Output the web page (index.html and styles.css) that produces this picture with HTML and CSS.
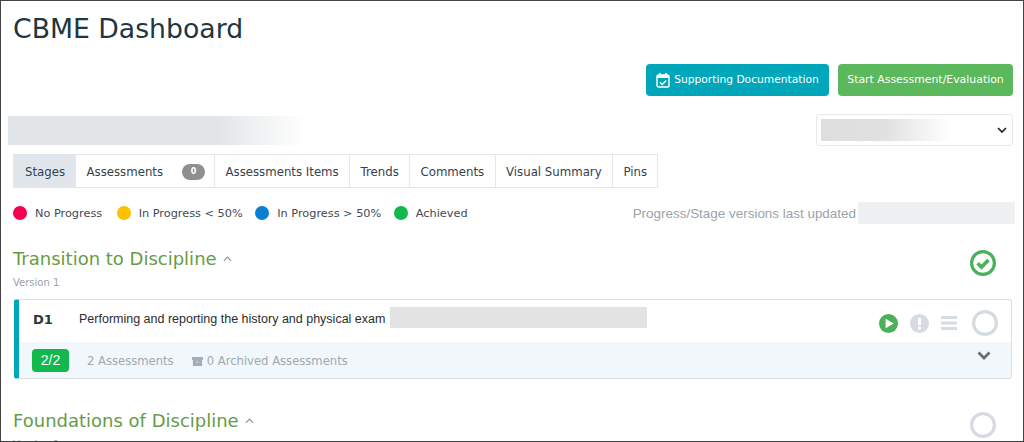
FILE: index.html
```html
<!DOCTYPE html>
<html lang="en">
<head>
<meta charset="utf-8">
<title>CBME Dashboard</title>
<link rel="stylesheet" href="styles.css">
</head>
<body>
<div class="frame">
  <h1 class="title">CBME Dashboard</h1>
  <div class="actions">
    <a class="btn btn-info">
      <svg class="btn-icon" viewBox="0 0 14 16" width="14" height="16" aria-hidden="true"><rect x="1" y="3" width="12" height="12" rx="1.5" fill="none" stroke="currentColor" stroke-width="1.4"/><rect x="1" y="3" width="12" height="3" fill="currentColor"/><rect x="3" y="1" width="2" height="3.5" rx=".6" fill="currentColor"/><rect x="9" y="1" width="2" height="3.5" rx=".6" fill="currentColor"/><path d="M4 10.2l2.2 2.2L10.2 8.4" fill="none" stroke="currentColor" stroke-width="1.4"/></svg>
      Supporting Documentation</a>
    <a class="btn btn-success">Start Assessment/Evaluation</a>
  </div>
  <div class="filter-row">
    <div class="redact-name"></div>
    <div class="select-box">
      <div class="redact-select"></div>
      <svg viewBox="0 0 10 6" width="10" height="6" aria-hidden="true"><path d="M1 1l4 4 4-4" fill="none" stroke="#222" stroke-width="1.7"/></svg>
    </div>
  </div>
  <ul class="tabs">
    <li class="tab tab-active">Stages</li>
    <li class="tab tab-badge">Assessments <span class="badge">0</span></li>
    <li class="tab">Assessments Items</li>
    <li class="tab">Trends</li>
    <li class="tab">Comments</li>
    <li class="tab">Visual Summary</li>
    <li class="tab">Pins</li>
  </ul>
  <div class="legend-row">
    <div class="legend">
      <span class="legend-item"><i class="dot dot-red"></i>No Progress</span>
      <span class="legend-item"><i class="dot dot-yellow"></i>In Progress &lt; 50%</span>
      <span class="legend-item"><i class="dot dot-blue"></i>In Progress &gt; 50%</span>
      <span class="legend-item"><i class="dot dot-green"></i>Achieved</span>
    </div>
    <div class="updated">Progress/Stage versions last updated<span class="redact-date"></span></div>
  </div>
  <section class="stage">
    <div class="stage-head">
      <div>
        <h2 class="stage-title">Transition to Discipline <svg viewBox="0 0 10 6" width="9" height="6" aria-hidden="true"><path d="M1 5l4-4 4 4" fill="none" stroke="#8a949c" stroke-width="1.3"/></svg></h2>
        <div class="version">Version 1</div>
      </div>
      <svg class="stage-status" viewBox="0 0 26 26" width="26" height="26" aria-hidden="true"><circle cx="13" cy="13" r="11.4" fill="none" stroke="#4cb05a" stroke-width="3.2"/><path d="M7.600 13.200l3.900 3.900 7-7" fill="none" stroke="#4cb05a" stroke-width="3.600"/></svg>
    </div>
    <div class="card">
      <div class="card-top">
        <span class="code">D1</span>
        <span class="desc">Performing and reporting the history and physical exam</span>
        <span class="redact-desc"></span>
        <div class="card-icons">
          <svg viewBox="0 0 20 20" width="19" height="19" aria-hidden="true"><circle cx="10" cy="10" r="10" fill="#4cb05a"/><path d="M7 5v10l8.500-5z" fill="#fff"/></svg>
          <svg viewBox="0 0 20 20" width="19" height="19" aria-hidden="true"><circle cx="10" cy="10" r="10" fill="#d5dbe1"/><rect x="8.400" y="4" width="3.200" height="8" rx="1" fill="#fff"/><circle cx="10" cy="14.800" r="1.700" fill="#fff"/></svg>
          <svg viewBox="0 0 16 14" width="16" height="14" aria-hidden="true"><path d="M0 0h16v3H0zM0 5.500h16v3H0zM0 11h16v3H0z" fill="#d5dbe1"/></svg>
          <svg class="ring" viewBox="0 0 26 26" width="26" height="26" aria-hidden="true"><circle cx="13" cy="13" r="11.400" fill="none" stroke="#d5dbe1" stroke-width="3.200"/></svg>
        </div>
      </div>
      <div class="card-bottom">
        <span class="count">2/2</span>
        <span class="meta">2 Assessments</span>
        <span class="meta meta-archived"><svg viewBox="0 0 12 12" width="11" height="11" aria-hidden="true"><path d="M0 1h12v3.400H0zM1 4.400h10V11H1z" fill="#a4aeb7"/><path d="M4.500 6h3v1h-3z" fill="#d3d9de"/></svg>0 Archived Assessments</span>
        <svg class="expand" viewBox="0 0 14 9" width="14" height="9" aria-hidden="true"><path d="M1.500 1.500L7 7l5.500-5.500" fill="none" stroke="#666e75" stroke-width="2.800"/></svg>
      </div>
    </div>
  </section>
  <section class="stage stage-next">
    <div class="stage-head">
      <div>
        <h2 class="stage-title">Foundations of Discipline <svg viewBox="0 0 10 6" width="9" height="6" aria-hidden="true"><path d="M1 5l4-4 4 4" fill="none" stroke="#8a949c" stroke-width="1.3"/></svg></h2>
        <div class="version">Version 1</div>
      </div>
      <svg class="stage-status" viewBox="0 0 26 26" width="26" height="26" aria-hidden="true"><circle cx="13" cy="13" r="11.400" fill="none" stroke="#d5dbe1" stroke-width="3.200"/></svg>
    </div>
  </section>
</div>
</body>
</html>
```
FILE: styles.css
```css
* { box-sizing: border-box; }
html, body { margin: 0; padding: 0; background: #fff; }
body { font-family: "DejaVu Sans", Verdana, sans-serif; overflow: hidden; }
.frame {
  width: 1024px; height: 442px; overflow: hidden;
  border: 1px solid #444;
  padding: 0 10px 0 12px;
}
.title {
  margin: 0; padding-top: 12px;
  font-size: 26.7px; line-height: 32px; font-weight: 400; color: #21363f;
}
.actions { display: flex; justify-content: flex-end; gap: 9px; margin-top: 19px; }
.btn {
  display: flex; align-items: center; justify-content: center; gap: 4px;
  height: 32px; padding-bottom: 1px; border-radius: 4px; color: #fff; font-size: 10.7px; white-space: nowrap;
}
.btn-info { width: 183px; background: #00a7bb; }
.btn-success { width: 175px; background: #5cb85c; font-size: 10.9px; }
.btn-icon { flex: none; }
.filter-row {
  display: flex; justify-content: space-between; align-items: flex-start;
  margin: 18px 0 0 -5px;
}
.redact-name {
  width: 298px; height: 29px; margin-top: 2px;
  background: linear-gradient(90deg, #e2e5e7 0%, #e2e5e7 70%, #fff 100%);
}
.select-box {
  display: flex; align-items: center; justify-content: space-between;
  width: 197px; height: 32px; padding: 0 5px 0 4px;
  border: 1px solid #e6e8ea; border-radius: 3px;
}
.redact-select {
  width: 130px; height: 22px;
  background: linear-gradient(90deg, #dfdede 0%, #e2e1e1 50%, #fff 100%);
}
.tabs {
  display: flex; list-style: none; margin: 8px 0 0; padding: 0;
  width: max-content; height: 34px;
  border: 1px solid #e4e7ea;
}
.tab {
  display: flex; align-items: center; padding: 1px 10.4px 0;
  font-size: 11.75px; color: #36424c; border-left: 1px solid #e4e7ea; white-space: nowrap;
}
.tab:first-child { border-left: 0; padding-left: 11px; padding-right: 10px; }
.tab-active { background: #e1e6ed; }
.tab-badge { gap: 19px; padding-right: 9px; }
.badge {
  display: inline-flex; align-items: center; justify-content: center;
  width: 23px; height: 16px; border-radius: 8px;
  background: #8f8f8f; color: #fff; font-size: 8px; font-weight: 700;
}
.legend-row { display: flex; justify-content: space-between; align-items: center; margin-top: 14px; height: 22px; margin-right: -2px; }
.legend { display: flex; gap: 12.5px; font-size: 11.3px; color: #3f4a53; }
.legend-item { display: flex; align-items: center; gap: 8px; }
.legend-item:first-child { margin-right: 2px; }
.dot { width: 14px; height: 14px; border-radius: 50%; display: block; }
.dot-red { background: #f5004f; }
.dot-yellow { background: #fdc000; }
.dot-blue { background: #0a7fd1; }
.dot-green { background: #12b84c; }
.updated {
  display: flex; align-items: center; gap: 2px;
  font-family: "Liberation Sans", Arial, sans-serif; font-size: 13.45px; color: #9aa3ab;
}
.redact-date { display: block; width: 157px; height: 22px; background: #eef0f1; border-radius: 2px; }
.stage { margin-top: 22px; }
.stage-head { display: flex; justify-content: space-between; align-items: flex-start; }
.stage-head .stage-status { margin: 4px 17px 0 0; }
.stage-title {
  margin: 0; font-size: 18px; line-height: 26px; font-weight: 400; color: #669c45;
}
.stage-title svg { vertical-align: 3px; margin-left: 1px; }
.version { margin-top: 4px; font-size: 10px; line-height: 14px; color: #9aa3ab; }
.card {
  margin-top: 9px; width: 998px; height: 80px; margin-left: 1px;
  border: 1px solid #d8dee3; border-left: 5px solid #00a7bb; border-radius: 3px;
  overflow: hidden;
}
.card-top { display: flex; align-items: center; height: 42px; padding: 0 0 4px 14px; }
.code { width: 46px; font-size: 13px; font-weight: 700; color: #2b3740; }
.desc { font-family: "Liberation Sans", Arial, sans-serif; font-size: 12.5px; color: #2d2d2d; }
.redact-desc { width: 257px; height: 21px; margin: -4px 0 0 5px; background: #e4e3e3; }
.card-icons { display: flex; align-items: center; gap: 12px; margin-left: auto; padding-right: 13px; margin-top: 8px; }
.card-icons .ring { margin-left: 3px; }
.card-bottom {
  display: flex; align-items: center; height: 36px; padding-left: 13px;
  background: #f1f7fb;
}
.count {
  display: flex; align-items: center; justify-content: center;
  width: 37px; height: 23px; border-radius: 4px; background: #12b84c; color: #fff;
  font-family: "Liberation Sans", Arial, sans-serif; font-size: 14px;
}
.meta { font-size: 11.6px; color: #a0a9b1; margin-left: 18px; margin-top: 2px; }
.meta-archived { display: flex; align-items: center; gap: 4px; }
.expand { margin-left: auto; margin-right: 20px; margin-top: -9px; }
.stage-next { margin-top: 29px; }
```
